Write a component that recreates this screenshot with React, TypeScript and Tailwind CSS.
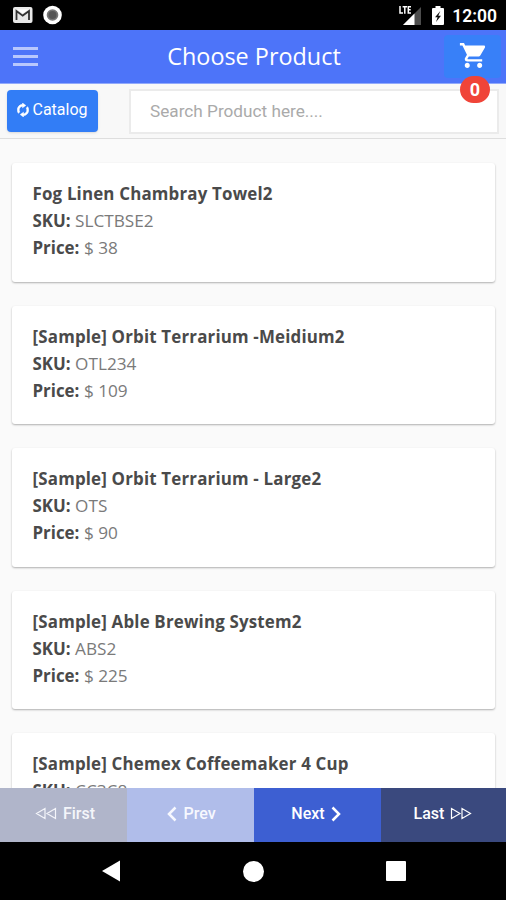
import { IoMdCart } from 'react-icons/io';

interface Product {
  name: string;
  sku: string;
  price?: number;
}

const PRODUCTS: Product[] = [
  { name: 'Fog Linen Chambray Towel2', sku: 'SLCTBSE2', price: 38 },
  { name: '[Sample] Orbit Terrarium -Meidium2', sku: 'OTL234', price: 109 },
  { name: '[Sample] Orbit Terrarium - Large2', sku: 'OTS', price: 90 },
  { name: '[Sample] Able Brewing System2', sku: 'ABS2', price: 225 },
  { name: '[Sample] Chemex Coffeemaker 4 Cup', sku: 'CC3C8' },
];

function StatusBar() {
  return (
    <div className="flex h-[30px] shrink-0 items-center bg-black pr-[9px] pl-[13px] text-white">
      <svg width="20" height="16" viewBox="0 0 20 16">
        <rect x="0" y="0" width="19.5" height="16" rx="2" fill="#e8e8e8" />
        <path d="M3.5 13V4l6.2 4.6L16 4v9" fill="none" stroke="#333" strokeWidth="1.8" />
        <path d="M4 2.5h11.5L9.7 6.6z" fill="#fff" />
      </svg>
      <svg className="ml-[10px]" width="19" height="20" viewBox="0 0 19 20">
        <circle cx="9.5" cy="10" r="9.3" fill="#fff" />
        <circle cx="9.5" cy="10" r="5.8" fill="#777" />
        <circle cx="9.5" cy="10" r="4" fill="#555" />
      </svg>
      <svg className="ml-auto" width="23" height="20" viewBox="0 0 23 20">
        <path d="M22 2v18H4z" fill="#4d4d4d" />
        <path d="M15.5 8.5V20H4z" fill="#fff" />
        <path
          d="M1 1v7h3M3.6 1.7H8M5.8 1.7v7M12 1.7H9.3v6.3H12M9.3 4.8h2.4"
          fill="none"
          stroke="#fff"
          strokeWidth="1.5"
        />
      </svg>
      <svg className="ml-[10px]" width="12" height="19" viewBox="0 0 12 19">
        <path d="M3.5 0h5v2H11a1 1 0 0 1 1 1v15a1 1 0 0 1-1 1H1a1 1 0 0 1-1-1V3a1 1 0 0 1 1-1h2.5z" fill="#fff" />
        <path d="M8.3 5 3 11.3h2.6L4 16l5-6.2H6.3z" fill="#111" />
      </svg>
      <span className="ml-[8px] pt-[2px] font-[Roboto,sans-serif] text-[17.5px] leading-5 font-semibold">12:00</span>
    </div>
  );
}

function Header() {
  return (
    <header className="relative flex h-[54px] shrink-0 items-center justify-between border-b border-[#91a9fb] bg-[#4d74f9] pr-[5px] pl-[13px]">
      <div className="flex w-[25px] flex-col gap-[5px]">
        <span className="h-[3px] bg-[#b8c7fd]" />
        <span className="h-[3px] bg-[#b8c7fd]" />
        <span className="h-[3px] bg-[#b8c7fd]" />
      </div>
      <h1 className="ml-[26px] pt-px text-[23.4px] text-white">Choose Product</h1>
      <div className="mb-px flex h-[43px] w-[57px] items-center justify-center rounded-sm bg-[#3880f8]">
        <IoMdCart className="mb-px h-[31px] w-[31px] text-white" />
      </div>
      <span className="absolute top-[46px] right-[16px] flex h-[27px] w-[30px] items-center justify-center rounded-full bg-[#f04438] font-[Roboto,sans-serif] text-[18px] font-bold text-white">
        0
      </span>
    </header>
  );
}

function SyncIcon() {
  return (
    <svg width="12" height="14" viewBox="0 0 12 14" fill="currentColor" stroke="currentColor" strokeWidth="0.5">
      <path d="M5.5 3.2C3.5 3.4 2.2 5 2.2 7c0 .8.2 1.400.6 2L1.3 10.300C.6 9.400.3 8.200.3 7c0-3 2.200-5.500 5.200-5.700V0l3.300 2.400-3.300 2.400z" />
      <path d="M6.5 10.8c2-.2 3.3-1.8 3.3-3.8 0-.8-.2-1.4-.6-2l1.5-1.3c.7.9 1 2.1 1 3.3 0 3-2.2 5.5-5.2 5.7V14l-3.300-2.400 3.300-2.400z" />
    </svg>
  );
}

function Toolbar() {
  return (
    <div className="flex h-[55px] shrink-0 justify-between border-b border-[#dedede] bg-[#f8f8f8] pt-[6px] pr-[7px] pl-[7px] font-[Roboto,sans-serif]">
      <button className="flex h-[42px] w-[91px] items-center justify-center gap-[3px] rounded-[4px] bg-[#327df6] pb-[3px] text-[16px] text-white shadow-sm">
        <SyncIcon />
        Catalog
      </button>
      <input
        className="-mt-px h-[45px] w-[370px] border-2 border-[#ebebeb] bg-white pb-px pl-[19px] text-[17.2px] text-[#555] placeholder:text-[#aaa]"
        placeholder="Search Product here...."
      />
    </div>
  );
}

function ProductCard({ product }: { product: Product }) {
  return (
    <div className="h-[118.5px] shrink-0 rounded-[3px] bg-white px-[20.5px] pt-[17px] text-[17.2px] leading-[27px] text-[#7a7a7a] shadow-[0_1px_2px_rgba(0,0,0,0.3)]">
      <p className="text-[16.9px] font-bold tracking-[0.18px] text-[#4a4a4a]">{product.name}</p>
      <p>
        <b className="text-[16.9px] font-bold text-[#4a4a4a]">SKU:</b> {product.sku}
      </p>
      {product.price !== undefined && (
        <p>
          <b className="text-[16.9px] font-bold text-[#4a4a4a]">Price:</b> $ {product.price}
        </p>
      )}
    </div>
  );
}

function Pager() {
  return (
    <div className="grid h-[54px] shrink-0 grid-cols-[127px_127px_127px_125px] font-[Roboto,sans-serif] text-[16px] font-medium text-white">
      <button className="flex items-center justify-center gap-[6px] bg-[#b0b5ca] pb-[3px] pl-[3px] text-[#f4f5fa]">
        <svg width="22" height="13" viewBox="0 0 22 13" fill="none" stroke="currentColor" strokeWidth="1.2">
          <path d="M10 1.5v10L1.5 6.5zM20.5 1.5v10L12 6.5z" />
        </svg>
        First
      </button>
      <button className="flex items-center justify-center gap-[6px] bg-[#b0bdea] pb-[3px] pl-[2px] text-[#f7f8fe]">
        <svg width="10" height="16" viewBox="0 0 10 16" fill="none" stroke="currentColor" strokeWidth="2.5">
          <path d="M8.5 1.5 2 8l6.5 6.5" />
        </svg>
        Prev
      </button>
      <button className="flex items-center justify-center gap-[6px] bg-[#3d5fd2] pr-[3px] pb-[3px]">
        Next
        <svg width="10" height="16" viewBox="0 0 10 16" fill="none" stroke="currentColor" strokeWidth="2.5">
          <path d="M1.5 1.5 8 8l-6.5 6.5" />
        </svg>
      </button>
      <button className="flex items-center justify-center gap-[6px] bg-[#3a497e] pr-px pb-[3px]">
        Last
        <svg width="22" height="13" viewBox="0 0 22 13" fill="none" stroke="currentColor" strokeWidth="1.2">
          <path d="M1.5 1.5v10L10 6.5zM12 1.5v10l8.5-5z" />
        </svg>
      </button>
    </div>
  );
}

function NavBar() {
  return (
    <div className="flex h-[58px] shrink-0 items-center bg-black pl-[102px]">
      <svg width="18" height="22" viewBox="0 0 18 22" fill="#fff">
        <path d="M18 0.5v21L0 11z" />
      </svg>
      <span className="ml-[123px] h-[21px] w-[21px] rounded-full bg-white" />
      <span className="ml-[122px] h-[20px] w-[20px] rounded-[1px] bg-white" />
    </div>
  );
}

export default function App() {
  return (
    <div className="flex h-[900px] w-[506px] flex-col overflow-hidden bg-[#fafafa] font-['Open_Sans',sans-serif]">
      <StatusBar />
      <Header />
      <Toolbar />
      <main className="flex min-h-0 flex-1 flex-col gap-6 overflow-hidden pt-[24px] pr-[11px] pl-[12px]">
        {PRODUCTS.map((product) => (
          <ProductCard key={product.name} product={product} />
        ))}
      </main>
      <Pager />
      <NavBar />
    </div>
  );
}
